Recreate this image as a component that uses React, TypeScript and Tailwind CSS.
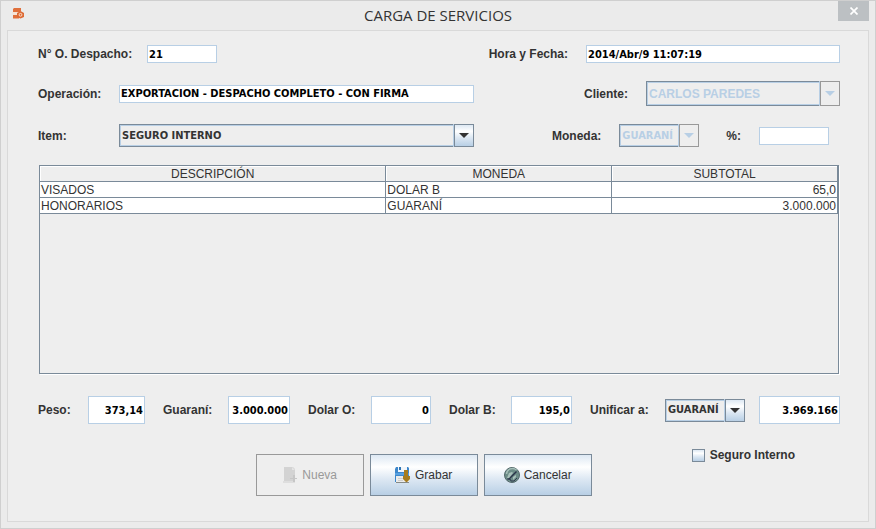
import React, { useState } from "react";
import clsx from "clsx";

const labelClass = "shrink-0 whitespace-nowrap text-xs font-bold text-[#333]";
const fieldFont = "font-['DejaVu_Sans_Condensed','DejaVu_Sans',sans-serif] text-[11px] font-bold";
const metal =
  "bg-[linear-gradient(to_bottom,#dde8f3_0%,#ffffff_30%,#dde8f3_60%,#b8cfe5_100%)]";

type FieldProps = {
  id: string;
  value: string;
  className?: string;
  onChange: (value: string) => void;
};

function Field({ id, value, className, onChange }: FieldProps) {
  return (
    <input
      id={id}
      type="text"
      value={value}
      onChange={(e) => onChange(e.target.value)}
      className={clsx(
        "min-w-0 border border-[#b8cfe5] bg-white px-px text-black outline-none",
        fieldFont,
        className,
      )}
    />
  );
}

type ComboProps = {
  id: string;
  options: string[];
  className?: string;
  disabled?: boolean;
  plain?: boolean;
};

function Combo({ id, options, className, disabled, plain }: ComboProps) {
  return (
    <div className={clsx("relative", className)}>
      <select
        id={id}
        disabled={disabled}
        className={clsx(
          "block size-full appearance-none border border-[#7a8a99] bg-[#eee] pl-0.5 pr-5 opacity-100 shadow-[inset_0_0_0_1px_#b8cfe5] outline-none",
          plain ? "text-xs font-bold" : clsx("pt-px", fieldFont),
          disabled ? "text-[#b8cfe5]" : "text-[#333]",
        )}
      >
        {options.map((o) => (
          <option key={o}>{o}</option>
        ))}
      </select>
      <span
        className={clsx(
          "pointer-events-none absolute inset-y-0 right-0 flex w-5 items-center justify-center border shadow-[-1px_0_0_#b8cfe5]",
          disabled ? "border-[#999] bg-[#eee] text-[#b8cfe5]" : clsx("border-[#7a8a99] text-[#333]", metal),
        )}
      >
        <svg width="10" height="5" viewBox="0 0 10 5" fill="currentColor" aria-hidden="true">
          <path d="M0 0h10L5 5z" />
        </svg>
      </span>
    </div>
  );
}

function AppIcon() {
  return (
    <svg width="13" height="12" viewBox="0 0 13 12" aria-hidden="true">
      <path d="M2 0h7v3l-1 1H1V1z" fill="#e0703c" />
      <path d="M0 4h6v3H1z" fill="#f6e3d5" />
      <path d="M1 7h6v3.500H1z" fill="#e0703c" />
      <path d="M8.500 3l3.500 2v4l-3.500 1.500L5 9V5z" fill="#dd6a35" />
      <circle cx="8.5" cy="6.800" r="1.400" fill="none" stroke="#fbe6d6" strokeWidth=".9" />
    </svg>
  );
}

function NewIcon() {
  return (
    <svg width="16" height="16" viewBox="0 0 16 16" aria-hidden="true">
      <path d="M2 0h9l2 2v13H2z" fill="#d3d3d3" />
      <path d="M1 14h12v2H1z" fill="#dedede" />
      <path d="M10 0v3h3z" fill="#e4e4e4" />
      <path d="M11 8h2v3h2v1h-2v3h-2v-3H8v-1h3z" fill="#c6c6c6" />
    </svg>
  );
}

function SaveIcon() {
  return (
    <svg width="16" height="16" viewBox="0 0 16 16" aria-hidden="true">
      <path d="M1 0h12l1 1v14H0V2z" fill="#3d87cb" />
      <path d="M3 0h9v5H3z" fill="#f2f6fa" />
      <path d="M4 0h2v3H4z" fill="#2f75b5" />
      <path d="M0 6h14v2H0z" fill="#56a0e0" />
      <path d="M1 9h13v6H1z" fill="#ececea" />
      <path d="M3 11h5v1H3zM3 13h5v1H3z" fill="#cfcfcf" />
      <path d="M1 15h13v1H1z" fill="#868a86" />
      <path d="M9 3h4v6h2v3l-3 3h-1l-3-3V9h1z" fill="#a67c1e" />
    </svg>
  );
}

function CancelIcon() {
  return (
    <svg width="16" height="16" viewBox="0 0 16 16" aria-hidden="true">
      <circle cx="8" cy="8" r="7.5" fill="#6c8c87" stroke="#52686b" />
      <path d="M2.500 7a6 6 0 0 1 10-4" fill="none" stroke="#a5beb8" strokeWidth="1.5" />
      <path d="M4 12l8-8 1 1-8 8z" fill="#293248" />
      <path d="M5 6l3-1 1 1-4 5H3zM9 10l3-2v2l-3 3z" fill="#a9c1bb" />
      <path d="M3 12h3l1 2h3l3-3" fill="none" stroke="#333b50" />
    </svg>
  );
}

function ActionButton({
  icon,
  children,
  disabled,
}: {
  icon: React.ReactNode;
  children: React.ReactNode;
  disabled?: boolean;
}) {
  return (
    <button
      type="button"
      disabled={disabled}
      className={clsx(
        "flex h-[42px] w-[108px] items-center justify-center gap-1 border text-xs",
        disabled ? "border-[#999] bg-[#eee] text-[#999]" : clsx("border-[#7a8a99] text-[#333]", metal),
      )}
    >
      {icon}
      {children}
    </button>
  );
}

const rows = [
  { descripcion: "VISADOS", moneda: "DOLAR B", subtotal: "65,0" },
  { descripcion: "HONORARIOS", moneda: "GUARANÍ", subtotal: "3.000.000" },
];

export default function App() {
  const [values, setValues] = useState<Record<string, string>>({
    despacho: "21",
    fecha: "2014/Abr/9 11:07:19",
    operacion: "EXPORTACION - DESPACHO COMPLETO - CON FIRMA",
    porcentaje: "",
    peso: "373,14",
    guarani: "3.000.000",
    dolarO: "0",
    dolarB: "195,0",
    total: "3.969.166",
  });
  const bind = (id: string) => ({
    id,
    value: values[id],
    onChange: (v: string) => setValues((prev) => ({ ...prev, [id]: v })),
  });
  const th =
    "border-b border-r border-[#7a8a99] px-0 pb-0 pt-px font-normal leading-[14px] shadow-[inset_1px_1px_0_#fff]";
  const td = "border-b border-r border-[#7a8a99] bg-white px-px pb-0 pt-px leading-[14px]";

  return (
    <div className="flex min-h-screen flex-col border border-[#cfcfcf] bg-[#ebebeb] px-1.5 pb-1.5 font-['Liberation_Sans',Arial,sans-serif] text-xs text-[#333]">
      <header className="grid h-[29px] grid-cols-[1fr_auto_1fr] items-center">
        <div className="pb-1 pl-[5px]">
          <AppIcon />
        </div>
        <h1 className="pb-0.5 font-['Open_Sans',sans-serif] text-[15px] leading-5 text-[#333]">
          CARGA DE SERVICIOS
        </h1>
        <button
          type="button"
          aria-label="Cerrar"
          className="flex h-5 w-[31px] items-center justify-center self-start justify-self-end bg-[#bcc0c3] text-white"
        >
          <svg width="8" height="8" viewBox="0 0 8 8" stroke="currentColor" strokeWidth="1.7" aria-hidden="true">
            <path d="M.5.5l7 7M7.5.5l-7 7" />
          </svg>
        </button>
      </header>

      <main className="flex flex-1 flex-col border border-[#d9d9d9] bg-[#eee] pb-[25px] pl-[30px] pr-7 pt-3.5">
        <div className="flex flex-col gap-[18px]">
          <div className="flex items-center">
            <label htmlFor="despacho" className={clsx(labelClass, "w-[109px]")}>N° O. Despacho:</label>
            <Field {...bind("despacho")} className="h-[18px] w-[70px]" />
            <div className="ml-auto flex items-center gap-[18px]">
              <label htmlFor="fecha" className={labelClass}>Hora y Fecha:</label>
              <Field {...bind("fecha")} className="h-[18px] w-[254px]" />
            </div>
          </div>

          <div className="flex items-center">
            <label htmlFor="operacion" className={clsx(labelClass, "w-[81px]")}>Operación:</label>
            <Field {...bind("operacion")} className="h-[18px] flex-1" />
            <div className="flex w-[366px] items-center justify-end gap-[18px]">
              <label htmlFor="cliente" className={labelClass}>Cliente:</label>
              <Combo id="cliente" options={["CARLOS PAREDES"]} disabled plain className="h-[25px] w-[194px]" />
            </div>
          </div>

          <div className="flex items-center">
            <label htmlFor="item" className={clsx(labelClass, "w-[81px]")}>Item:</label>
            <Combo id="item" options={["SEGURO INTERNO"]} className="h-[23px] flex-1" />
            <div className="flex w-[366px] items-center justify-end gap-[18px] pr-[11px]">
              <label htmlFor="moneda" className={labelClass}>Moneda:</label>
              <Combo id="moneda" options={["GUARANÍ"]} disabled className="mr-[9px] h-[23px] w-20" />
              <label htmlFor="porcentaje" className={labelClass}>%:</label>
              <Field {...bind("porcentaje")} className="h-[18px] w-[70px]" />
            </div>
          </div>
        </div>

        <div className="mx-px mt-[18px] min-h-[209px] flex-1 border border-[#7a8a99] shadow-[1px_1px_0_#fff]">
          <table className="w-full table-fixed border-separate border-spacing-0 text-xs">
            <colgroup>
              <col className="w-[43.4%]" />
              <col className="w-[28.3%]" />
              <col />
            </colgroup>
            <thead>
              <tr>
                <th className={th}>DESCRIPCIÓN</th>
                <th className={th}>MONEDA</th>
                <th className={th}>SUBTOTAL</th>
              </tr>
            </thead>
            <tbody>
              {rows.map((r) => (
                <tr key={r.descripcion}>
                  <td className={td}>{r.descripcion}</td>
                  <td className={td}>{r.moneda}</td>
                  <td className={clsx(td, "text-right")}>{r.subtotal}</td>
                </tr>
              ))}
            </tbody>
          </table>
        </div>

        <div className="mt-[22px] flex items-center">
          <label htmlFor="peso" className={clsx(labelClass, "w-[50px]")}>Peso:</label>
          <Field {...bind("peso")} className="mr-[18px] h-7 w-[57px] grow text-right" />
          <label htmlFor="guarani" className={clsx(labelClass, "w-[65px]")}>Guaraní:</label>
          <Field {...bind("guarani")} className="mr-[18px] h-7 w-[62px] grow text-right" />
          <label htmlFor="dolarO" className={clsx(labelClass, "w-[63px]")}>Dolar O:</label>
          <Field {...bind("dolarO")} className="mr-[18px] h-7 w-[60px] grow text-right" />
          <label htmlFor="dolarB" className={clsx(labelClass, "w-[62px]")}>Dolar B:</label>
          <Field {...bind("dolarB")} className="mr-[18px] h-7 w-[61px] grow text-right" />
          <label htmlFor="unificar" className={clsx(labelClass, "w-[75px]")}>Unificar a:</label>
          <Combo id="unificar" options={["GUARANÍ"]} className="mr-3.5 h-[23px] w-20" />
          <Field {...bind("total")} className="h-7 w-[81px] grow text-right" />
        </div>

        <div className="mt-[23px] flex items-start justify-end gap-[100px] pr-[45px]">
          <div className="mt-[7px] flex gap-1.5">
            <ActionButton icon={<NewIcon />} disabled>Nueva</ActionButton>
            <ActionButton icon={<SaveIcon />}>Grabar</ActionButton>
            <ActionButton icon={<CancelIcon />}>Cancelar</ActionButton>
          </div>
          <label className="flex items-center gap-[5px] font-bold whitespace-nowrap">
            <input
              type="checkbox"
              className={clsx(
                "size-[13px] appearance-none border border-[#7a8a99] checked:shadow-[inset_0_0_0_3px_#7a8a99]",
                metal,
              )}
            />
            Seguro Interno
          </label>
        </div>
      </main>
    </div>
  );
}
